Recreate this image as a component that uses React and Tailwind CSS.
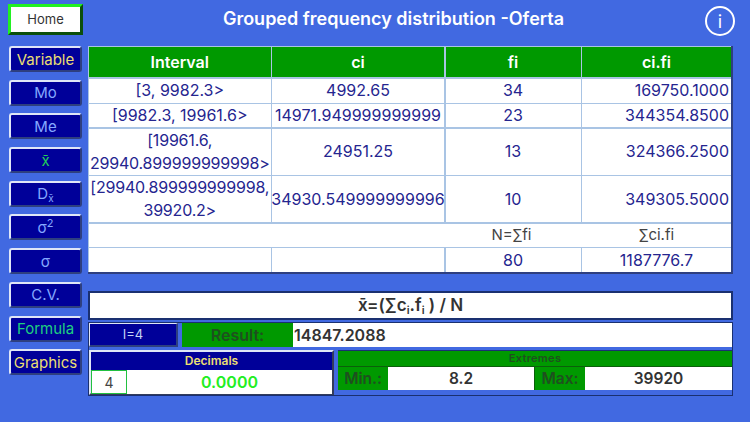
const font = "[font-family:Inter,'Liberation_Sans',sans-serif]"

function SideButton({ children, color }) {
    return (
        <div className={`h-[26px] w-[73px] flex items-center justify-center rounded-[3px] bg-[#000099] border-t-2 border-l-2 border-t-[#dfe6f7] border-l-[#dfe6f7] border-b-2 border-r-2 border-b-[#2e3f7f] border-r-[#2e3f7f] text-[15px] leading-none whitespace-nowrap ${color}`}>
            {children}
        </div>
    )
}

function Cell({ children, className = "" }) {
    return <div className={`bg-white text-[#25258f] text-[16px] leading-[23px] flex items-center justify-center text-center whitespace-nowrap ${className}`}>{children}</div>
}

function Head({ children }) {
    return <div className="bg-[#009900] text-white text-[16px] font-semibold flex items-center justify-center">{children}</div>
}

export default function App() {
    return (
        <div className={`w-[750px] h-[422px] overflow-hidden bg-[#4169e1] flex flex-col ${font}`}>
            <header className="h-[46px] pl-2 pr-[15px] flex items-start">
                <div className="mt-1 h-[31px] w-[75px] flex items-center justify-center bg-white border-t-[3px] border-l-[3px] border-t-[#22f022] border-l-[#22f022] border-b-[3px] border-r-[3px] border-b-[#0b4f0b] border-r-[#0b4f0b] text-[#333] text-[13px]">Home</div>
                <h1 className="flex-1 mt-[9px] text-center text-white text-[18px] font-semibold leading-5 pr-[1px]">Grouped frequency distribution -Oferta</h1>
                <div className="mt-[6px] w-[30px] h-[30px] rounded-full border-2 border-white flex items-center justify-center text-white text-[18px]">i</div>
            </header>

            <div className="flex pl-[9px] gap-[6px]">
                <nav className="flex flex-col gap-[7.7px] w-[73px]">
                    <SideButton color="text-[#ecdf72]">Variable</SideButton>
                    <SideButton color="text-[#85a8ff]">Mo</SideButton>
                    <SideButton color="text-[#85a8ff]">Me</SideButton>
                    <SideButton color="text-[#22d05a]">x̄</SideButton>
                    <SideButton color="text-[#85a8ff]"><span>D<sub className="text-[10px]">x̄</sub></span></SideButton>
                    <SideButton color="text-[#85a8ff]"><span>σ<sup className="text-[11px]">2</sup></span></SideButton>
                    <SideButton color="text-[#85a8ff]">σ</SideButton>
                    <SideButton color="text-[#85a8ff]">C.V.</SideButton>
                    <SideButton color="text-[#1fd07f]">Formula</SideButton>
                    <SideButton color="text-[#ecdf72]">Graphics</SideButton>
                </nav>

                <main className="w-[645px] flex flex-col">
                    <div className="h-[228px] grid grid-cols-[181.5px_172px_135px_149px] grid-rows-[30px_24px_23px_46px_46px_23px_24px] gap-[1.5px] pt-[1px] pl-[1px] bg-[#a9c4e4] border-r-2 border-b-2 border-r-[#2e3f7f] border-b-[#2e3f7f]">
                        <Head>Interval</Head>
                        <Head>ci</Head>
                        <Head>fi</Head>
                        <Head>ci.fi</Head>

                        <Cell>[3, 9982.3&gt;</Cell>
                        <Cell>4992.65</Cell>
                        <Cell>34</Cell>
                        <Cell className="justify-end pr-[2px]">169750.1000</Cell>

                        <Cell>[9982.3, 19961.6&gt;</Cell>
                        <Cell>14971.949999999999</Cell>
                        <Cell>23</Cell>
                        <Cell className="justify-end pr-[2px]">344354.8500</Cell>

                        <Cell className="tracking-[-0.2px]">[19961.6,<br />29940.899999999998&gt;</Cell>
                        <Cell>24951.25</Cell>
                        <Cell>13</Cell>
                        <Cell className="justify-end pr-[2px]">324366.2500</Cell>

                        <Cell className="tracking-[-0.2px]">[29940.899999999998,<br />39920.2&gt;</Cell>
                        <Cell>34930.549999999996</Cell>
                        <Cell>10</Cell>
                        <Cell className="justify-end pr-[2px]">349305.5000</Cell>

                        <div className="col-span-4 bg-white grid grid-cols-[355px_135px_149px] text-[#444] text-[15px]">
                            <span />
                            <span className="flex items-center justify-center">N=∑fi</span>
                            <span className="flex items-center justify-center pl-[6px]">∑ci.fi</span>
                        </div>

                        <Cell />
                        <Cell />
                        <Cell>80</Cell>
                        <Cell>1187776.7</Cell>
                    </div>

                    <div className="mt-[17px] h-[29px] bg-white border-2 border-[#1a3070] flex items-center justify-center text-[#333] text-[17px] font-semibold">
                        <span>x̄=(∑c<sub className="text-[11px]">i</sub>.f<sub className="text-[11px]">i</sub> ) / N</span>
                    </div>

                    <div className="mt-[2px] h-[74px] flex flex-col border border-[#1a3070]">
                        <div className="flex h-[24px]">
                            <div className="w-[89px] flex items-center justify-center bg-[#000099] border-t border-l border-t-[#dfe6f7] border-l-[#dfe6f7] border-b-2 border-r-2 border-b-[#2e3f7f] border-r-[#2e3f7f] text-[#c5d3f5] text-[13px]">I=4</div>
                            <div className="ml-1 w-[111px] flex items-center justify-center bg-[#009900] text-[#1f4f1f] text-[16px] font-semibold">Result:</div>
                            <div className="flex-1 bg-white flex items-center pl-[1px] text-[#333] text-[16px] font-semibold">14847.2088</div>
                        </div>
                        <div className="mt-[3px] flex gap-1">
                            <div className="w-[245px] h-[45px] flex flex-col border-2 border-[#333c5c] border-t-[#dfe6f7] border-l-[#dfe6f7]">
                                <div className="h-[18px] bg-[#000099] text-[#ecdf72] text-[12px] font-semibold flex items-center justify-center">Decimals</div>
                                <div className="flex-1 bg-white flex">
                                    <div className="w-[36px] border border-[#22c040] flex items-center justify-center text-[#444] text-[14px]">4</div>
                                    <div className="flex-1 flex items-center justify-center text-[#22ee22] text-[16px] font-semibold">0.0000</div>
                                </div>
                            </div>
                            <div className="flex-1 h-[45px] flex flex-col border-t border-[#1a3070] border-b-[5px] border-b-[#4169e1]">
                                <div className="h-[16px] bg-[#009900] border-b border-[#0b5f0b] text-[#1f4f1f] text-[11px] font-semibold tracking-[0.3px] flex items-center justify-center">Extremes</div>
                                <div className="flex-1 flex bg-white text-[#333] text-[15.5px] font-semibold">
                                    <div className="w-[50px] bg-[#009900] text-[#1f4f1f] flex items-center justify-center">Min.:</div>
                                    <div className="w-[146px] flex items-center justify-center">8.2</div>
                                    <div className="w-[51px] bg-[#009900] border-l border-[#0b5f0b] text-[#1f4f1f] flex items-center justify-center">Max:</div>
                                    <div className="flex-1 flex items-center justify-center">39920</div>
                                </div>
                            </div>
                        </div>
                    </div>
                </main>
            </div>
        </div>
    )
}
